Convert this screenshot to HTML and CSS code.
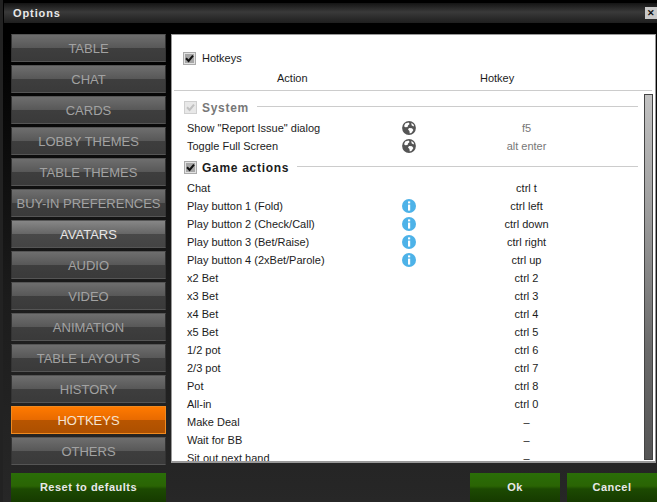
FILE: index.html
```html
<!DOCTYPE html>
<html lang="en">
<head>
<meta charset="utf-8">
<title>Options</title>
<link rel="stylesheet" href="styles.css">
</head>
<body>
<svg class="defs" width="0" height="0" aria-hidden="true">
  <symbol id="globe" viewBox="0 0 14 14">
    <circle cx="7" cy="7" r="6.9" fill="#555"/>
    <path d="M3.2 2.4 6.6 1.4 7.6 3 6 4.4 5.6 6 3.4 6.2 2 5.2Z M7 7 10 7.2 11.4 9 9.6 11.8 7.8 12.4 7.4 10 6 8.6Z M9.4 1.8 12 4 11.6 5.4 9.6 4.2Z" fill="#fff"/>
  </symbol>
  <symbol id="info" viewBox="0 0 14 14">
    <circle cx="7" cy="7" r="7" fill="#4db2e8"/>
    <rect x="6" y="2.4" width="2.2" height="2" fill="#fff"/>
    <rect x="6" y="5.6" width="2.2" height="6" fill="#fff"/>
  </symbol>
  <symbol id="tick" viewBox="0 0 9 9">
    <path d="M1 4.2 3.6 7 8 1.6" fill="none" stroke="currentColor" stroke-width="2"/>
  </symbol>
</svg>
<div class="window">
  <header class="titlebar">
    <span class="title">Options</span>
    <span class="close">✕</span>
  </header>
  <div class="main">
    <nav class="sidebar">
      <a class="tab">TABLE</a>
      <a class="tab">CHAT</a>
      <a class="tab">CARDS</a>
      <a class="tab">LOBBY THEMES</a>
      <a class="tab">TABLE THEMES</a>
      <a class="tab">BUY-IN PREFERENCES</a>
      <a class="tab bright">AVATARS</a>
      <a class="tab">AUDIO</a>
      <a class="tab">VIDEO</a>
      <a class="tab">ANIMATION</a>
      <a class="tab">TABLE LAYOUTS</a>
      <a class="tab">HISTORY</a>
      <a class="tab active">HOTKEYS</a>
      <a class="tab">OTHERS</a>
    </nav>
    <section class="panel">
      <div class="panel-head">
        <label class="check-row"><span class="check"><svg class="tick"><use href="#tick"/></svg></span>Hotkeys</label>
        <div class="columns"><span class="col-action">Action</span><span class="col-hotkey">Hotkey</span></div>
      </div>
      <div class="panel-body">
        <div class="list">
          <div class="group disabled"><span class="check"><svg class="tick"><use href="#tick"/></svg></span><b>System</b><i class="rule"></i></div>
          <div class="row"><span class="name">Show "Report Issue" dialog</span><svg class="ico"><use href="#globe"/></svg><span class="key muted">f5</span></div>
          <div class="row"><span class="name">Toggle Full Screen</span><svg class="ico"><use href="#globe"/></svg><span class="key muted">alt enter</span></div>
          <div class="group"><span class="check"><svg class="tick"><use href="#tick"/></svg></span><b>Game actions</b><i class="rule"></i></div>
          <div class="row"><span class="name">Chat</span><span class="ico"></span><span class="key">ctrl t</span></div>
          <div class="row"><span class="name">Play button 1 (Fold)</span><svg class="ico"><use href="#info"/></svg><span class="key">ctrl left</span></div>
          <div class="row"><span class="name">Play button 2 (Check/Call)</span><svg class="ico"><use href="#info"/></svg><span class="key">ctrl down</span></div>
          <div class="row"><span class="name">Play button 3 (Bet/Raise)</span><svg class="ico"><use href="#info"/></svg><span class="key">ctrl right</span></div>
          <div class="row"><span class="name">Play button 4 (2xBet/Parole)</span><svg class="ico"><use href="#info"/></svg><span class="key">ctrl up</span></div>
          <div class="row"><span class="name">x2 Bet</span><span class="ico"></span><span class="key">ctrl 2</span></div>
          <div class="row"><span class="name">x3 Bet</span><span class="ico"></span><span class="key">ctrl 3</span></div>
          <div class="row"><span class="name">x4 Bet</span><span class="ico"></span><span class="key">ctrl 4</span></div>
          <div class="row"><span class="name">x5 Bet</span><span class="ico"></span><span class="key">ctrl 5</span></div>
          <div class="row"><span class="name">1/2 pot</span><span class="ico"></span><span class="key">ctrl 6</span></div>
          <div class="row"><span class="name">2/3 pot</span><span class="ico"></span><span class="key">ctrl 7</span></div>
          <div class="row"><span class="name">Pot</span><span class="ico"></span><span class="key">ctrl 8</span></div>
          <div class="row"><span class="name">All-in</span><span class="ico"></span><span class="key">ctrl 0</span></div>
          <div class="row"><span class="name">Make Deal</span><span class="ico"></span><span class="key">–</span></div>
          <div class="row"><span class="name">Wait for BB</span><span class="ico"></span><span class="key">–</span></div>
          <div class="row"><span class="name">Sit out next hand</span><span class="ico"></span><span class="key">–</span></div>
        </div>
        <div class="scrollbar"></div>
      </div>
    </section>
  </div>
  <footer class="footer">
    <button class="green reset">Reset to defaults</button>
    <div class="actions">
      <button class="green ok">Ok</button>
      <button class="green cancel">Cancel</button>
    </div>
  </footer>
</div>
</body>
</html>
```
FILE: styles.css
```css
* { box-sizing: border-box; }
html, body { margin: 0; height: 100%; background: #000; overflow: hidden; }
.defs { position: absolute; }
.window {
  width: 657px; height: 502px; display: flex; flex-direction: column;
  padding-top: 3px; border-left: 3px solid #222;
  background: linear-gradient(#000 0, #000 40px, #1c1c1c 300px, #272727 100%);
  font-family: "Liberation Sans", Arial, sans-serif;
}
.titlebar {
  height: 20px; flex: none; display: flex; align-items: center; justify-content: space-between;
  padding: 0 0 0 9px; margin-left: 1px;
  background: linear-gradient(#141414, #3a3a3a 45%, #1e1e1e);
}
.title { color: #e8e8e8; font-weight: bold; font-size: 11px; letter-spacing: .9px; }
.close {
  width: 12px; height: 12px; background: #c9c9c9; color: #111; font-size: 9px; font-weight: bold;
  display: flex; align-items: center; justify-content: center; line-height: 1;
}
.main { flex: 1; display: flex; padding: 11px 0 0 8px; min-height: 0; }
.sidebar { width: 155px; flex: none; display: flex; flex-direction: column; gap: 3px; }
.tab {
  height: 28px; flex: none; display: flex; align-items: center; justify-content: center;
  color: #a2a2a2; font-size: 13px; white-space: nowrap;
  background: linear-gradient(#6e6e6e, #585858 49%, #3e3e3e 50%, #3a3a3a);
  border: 1px solid #2e2e2e; border-color: #555 #333 #555 #333;
}
.tab.bright { color: #e6e6e6; background: linear-gradient(#868686, #666 49%, #484848 50%, #444); }
.tab.active {
  color: #f5e3cf; background: linear-gradient(#ff7a00, #e86a00 49%, #b85500 50%, #ad5000);
  border-color: #f08a20;
}
.panel {
  width: 485px; height: 429px; margin-left: 5px; background: #fff; color: #1c1c1c;
  border: 1px solid #999; border-bottom-width: 2px;
  display: flex; flex-direction: column; font-size: 11px;
}
.panel-head { height: 56px; flex: none; padding-top: 16px; border-bottom: 1px solid #ccc; margin: 0 3px 0 2px; }
.check-row { display: flex; align-items: center; gap: 6px; padding-left: 9px; height: 14px; }
.check {
  width: 13px; height: 13px; flex: none; border: 1px solid #aaa; background: #a6a6a6;
  box-shadow: inset 0 0 0 1px #e2e2e2; color: #111; display: flex; align-items: center; justify-content: center;
}
.tick { width: 9px; height: 9px; display: block; }
.columns { position: relative; height: 14px; margin-top: 7px; }
.col-action { position: absolute; left: 103px; }
.col-hotkey { position: absolute; left: 306px; }
.panel-body { flex: 1; display: flex; min-height: 0; position: relative; }
.list { flex: 1; overflow: hidden; padding-top: 4px; }
.group { height: 24px; display: flex; align-items: center; padding: 1px 0 0 12px; gap: 5px; }
.group b { font-size: 12px; letter-spacing: .7px; color: #1c1c1c; }
.group .rule { flex: 1; height: 1px; background: #ccc; margin: -3px 17px 0 3px; }
.group.disabled { margin-bottom: 0; }
.group.disabled b { color: #777; }
.group.disabled .check { background: #e8e8e8; color: #c0c0c0; border-color: #d0d0d0; box-shadow: none; }
.row { height: 18px; display: flex; align-items: center; padding-left: 15px; }
.name { width: 215px; flex: none; }
.ico { width: 14px; height: 14px; flex: none; display: block; }
.key { width: 225px; text-align: center; flex: none; margin-left: -2px; }
.key.muted { color: #777; }
.scrollbar {
  position: absolute; right: 2px; top: 3px; bottom: 1px; width: 9px;
  border: 1px solid #444; background: linear-gradient(#c2c2c2, #a0a0a0 30%, #6a6a6a 70%, #555);
}
.footer { height: 30px; flex: none; display: flex; justify-content: space-between; padding: 1px 0 0 8px; }
.green {
  height: 29px; border: 0; color: #e9e9e9; font: bold 11px "Liberation Sans", Arial, sans-serif; letter-spacing: .5px; padding: 0 0 2px;
  background: linear-gradient(#2a6e08, #2a6404 45%, #1c4a02 55%, #163a00);
}
.reset { width: 155px; }
.actions { display: flex; gap: 7px; }
.ok { width: 90px; }
.cancel { width: 90px; }
```
